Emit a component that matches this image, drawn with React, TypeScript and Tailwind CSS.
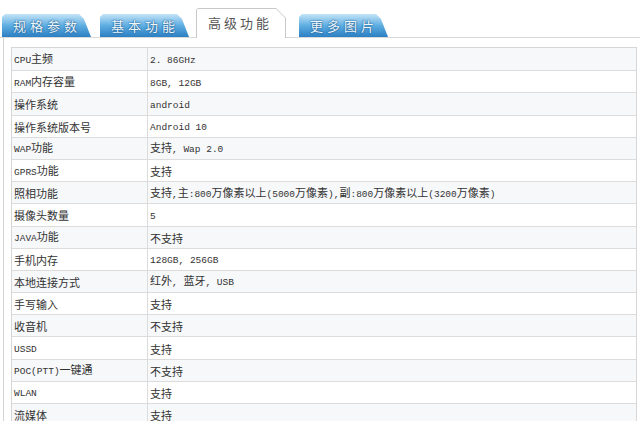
import React from 'react';

const rows: [string, string][] = [
  ['CPU主频', '2. 86GHz'],
  ['RAM内存容量', '8GB, 12GB'],
  ['操作系统', 'android'],
  ['操作系统版本号', 'Android 10'],
  ['WAP功能', '支持, Wap 2.0'],
  ['GPRS功能', '支持'],
  ['照相功能', '支持,主:800万像素以上(5000万像素),副:800万像素以上(3200万像素)'],
  ['摄像头数量', '5'],
  ['JAVA功能', '不支持'],
  ['手机内存', '128GB, 256GB'],
  ['本地连接方式', '红外, 蓝牙, USB'],
  ['手写输入', '支持'],
  ['收音机', '不支持'],
  ['USSD', '支持'],
  ['POC(PTT)一键通', '不支持'],
  ['WLAN', '支持'],
  ['流媒体', '支持'],
];

// Latin runs are set smaller, like the old SimSun rendering
const Mixed = ({ text }: { text: string }) => {
  const parts = text.split(/([\x00-\x7F]+)/).filter((p) => p !== '');
  return (
    <span className="leading-[14px]">
      {parts.map((p, i) =>
        /^[\x00-\x7F]+$/.test(p) ? (
          <span key={i} className="font-['Liberation_Mono',monospace] text-[9.5px] whitespace-pre">
            {p}
          </span>
        ) : (
          <span key={i} className="font-['Noto_Sans_CJK_SC',sans-serif] text-[11px]">
            {p}
          </span>
        )
      )}
    </span>
  );
};

const BlueTab = ({ label, className = '' }: { label: string; className?: string }) => (
  <div
    className={`h-[23px] w-[89px] flex items-center pl-[11px] bg-gradient-to-b from-[#c3e4f6] via-[#5eaee2] to-[#2b7fc2] [clip-path:polygon(0_3px,3px_0,77px_0,82px_5px,89px_100%,0_100%)] ${className}`}
  >
    <span className="font-['Noto_Sans_CJK_SC',sans-serif] text-[13px] tracking-[4px] text-[#eef7fd] [text-shadow:0_0_2px_#1b5a8f,0_0_1px_#1b5a8f]">
      {label}
    </span>
  </div>
);

const ActiveTab = ({ label }: { label: string }) => (
  <div className="ml-[7px] -mb-px h-[30px] w-[90px] bg-[#c9c9c9] pt-px px-px [clip-path:polygon(0_2px,2px_0,80px_0,90px_10px,90px_100%,0_100%)]">
    <div className="h-full w-full bg-white flex items-center pl-[11px] pb-[2px] [clip-path:polygon(0_1px,1px_0,79px_0,88px_9px,88px_100%,0_100%)]">
      <span className="font-['Noto_Sans_CJK_SC',sans-serif] text-[13px] tracking-[3px] text-[#555]">
        {label}
      </span>
    </div>
  </div>
);

export default function App() {
  return (
    <div className="w-[640px] h-[421px] bg-white overflow-hidden">
      {/* Tabs */}
      <div className="h-[38px] flex items-end pl-[2px] border-b border-[#d9d9d9]">
        <BlueTab label="规格参数" />
        <BlueTab label="基本功能" className="ml-[9px]" />
        <ActiveTab label="高级功能" />
        <BlueTab label="更多图片" className="ml-[13px]" />
      </div>

      {/* Spec table */}
      <div className="ml-[3px] border-l border-[#d5d5d5] pl-[7px] pt-[9px] h-full">
        <div className="w-[626px] border border-[#d6d6d6]">
          {rows.map(([k, v], i) => (
            <div
              key={k}
              className={`flex h-[22.2px] text-[#333] ${i > 0 ? 'border-t border-[#dcdcdc]' : ''} ${
                i % 2 === 0 ? 'bg-[#f7f8fa]' : 'bg-white'
              }`}
            >
              <div className="w-[136px] shrink-0 border-r border-[#dcdcdc] pl-[2px] flex items-center whitespace-nowrap">
                <Mixed text={k} />
              </div>
              <div className="pl-[2px] flex items-center whitespace-nowrap">
                <Mixed text={v} />
              </div>
            </div>
          ))}
        </div>
      </div>
    </div>
  );
}
